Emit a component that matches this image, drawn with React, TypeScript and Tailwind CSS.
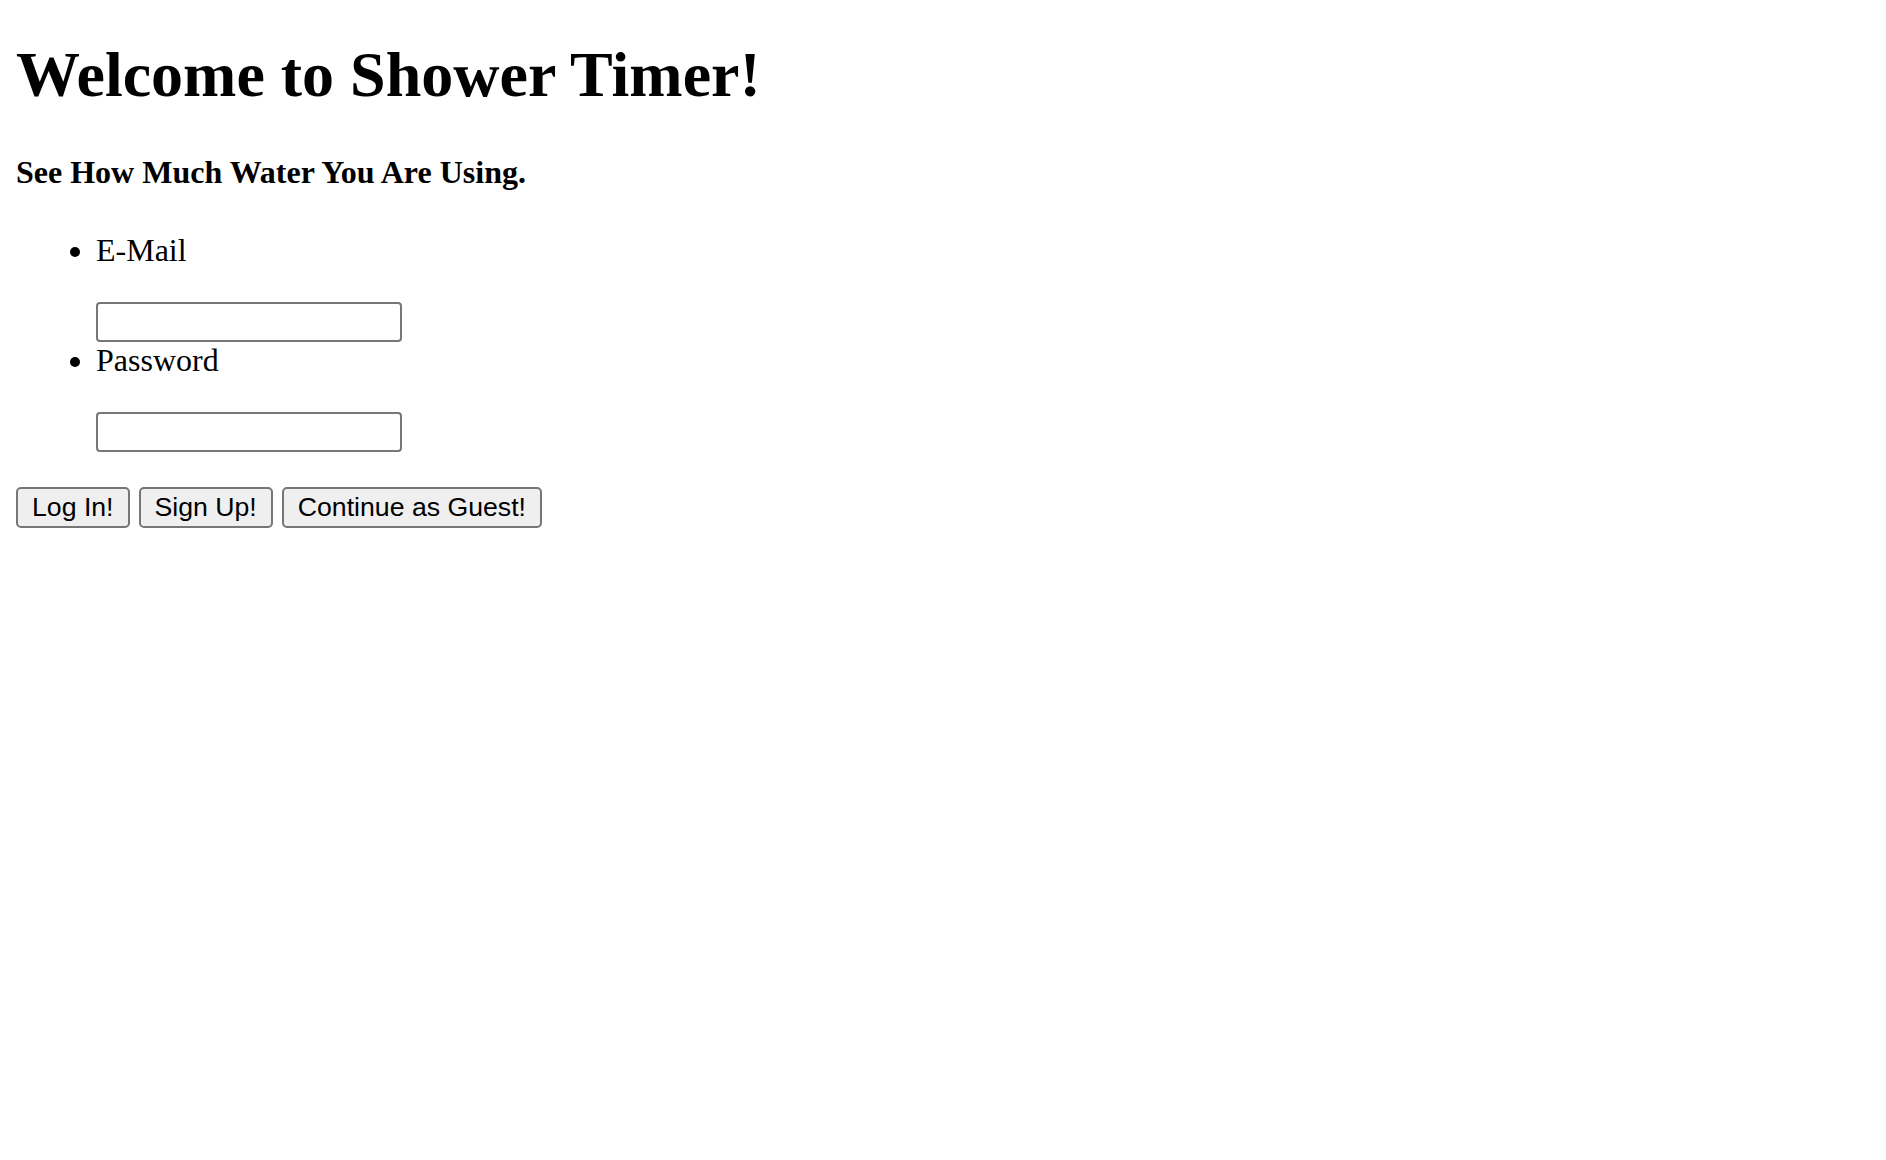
import { useState } from "react";

type FieldProps = {
  label: string;
  type: string;
  value: string;
  onChange: (value: string) => void;
};

const Field = ({ label, type, value, onChange }: FieldProps) => {
  return (
    <li>
      <div className="h-[37px]">{label}</div>
      <input
        type={type}
        value={value}
        onChange={(e) => onChange(e.target.value)}
        className="block mt-[33px] w-[306px] h-[40px] border-2 border-[#767676] rounded-[4px] bg-white px-[4px] text-[26.67px] leading-none font-['Liberation_Sans',Arial,sans-serif] outline-none"
      />
    </li>
  );
};

export default function App() {
  const [email, setEmail] = useState("");
  const [password, setPassword] = useState("");

  const buttonClass =
    "h-[41px] px-[14px] border-2 border-[#767676] rounded-[5px] bg-[#efefef] text-black text-[26.67px] leading-none font-['Liberation_Sans',Arial,sans-serif]";

  return (
    <div className="min-h-screen bg-white text-black font-['Liberation_Serif','Times_New_Roman',serif] pl-[16px] pt-px">
      <h1 className="mt-[37px] text-[64px] leading-[74px] font-bold">
        Welcome to Shower Timer!
      </h1>
      <h4 className="mt-[42px] text-[32px] leading-[37px] font-bold">
        See How Much Water You Are Using.
      </h4>

      {/* Login form */}
      <ul className="mt-[41px] pl-[80px] list-disc text-[32px] leading-[37px]">
        <Field label="E-Mail" type="email" value={email} onChange={setEmail} />
        <Field
          label="Password"
          type="password"
          value={password}
          onChange={setPassword}
        />
      </ul>

      <div className="mt-[35px] flex gap-[9px]">
        <button type="button" className={buttonClass}>
          Log In!
        </button>
        <button type="button" className={buttonClass}>
          Sign Up!
        </button>
        <button type="button" className={buttonClass}>
          Continue as Guest!
        </button>
      </div>
    </div>
  );
}
